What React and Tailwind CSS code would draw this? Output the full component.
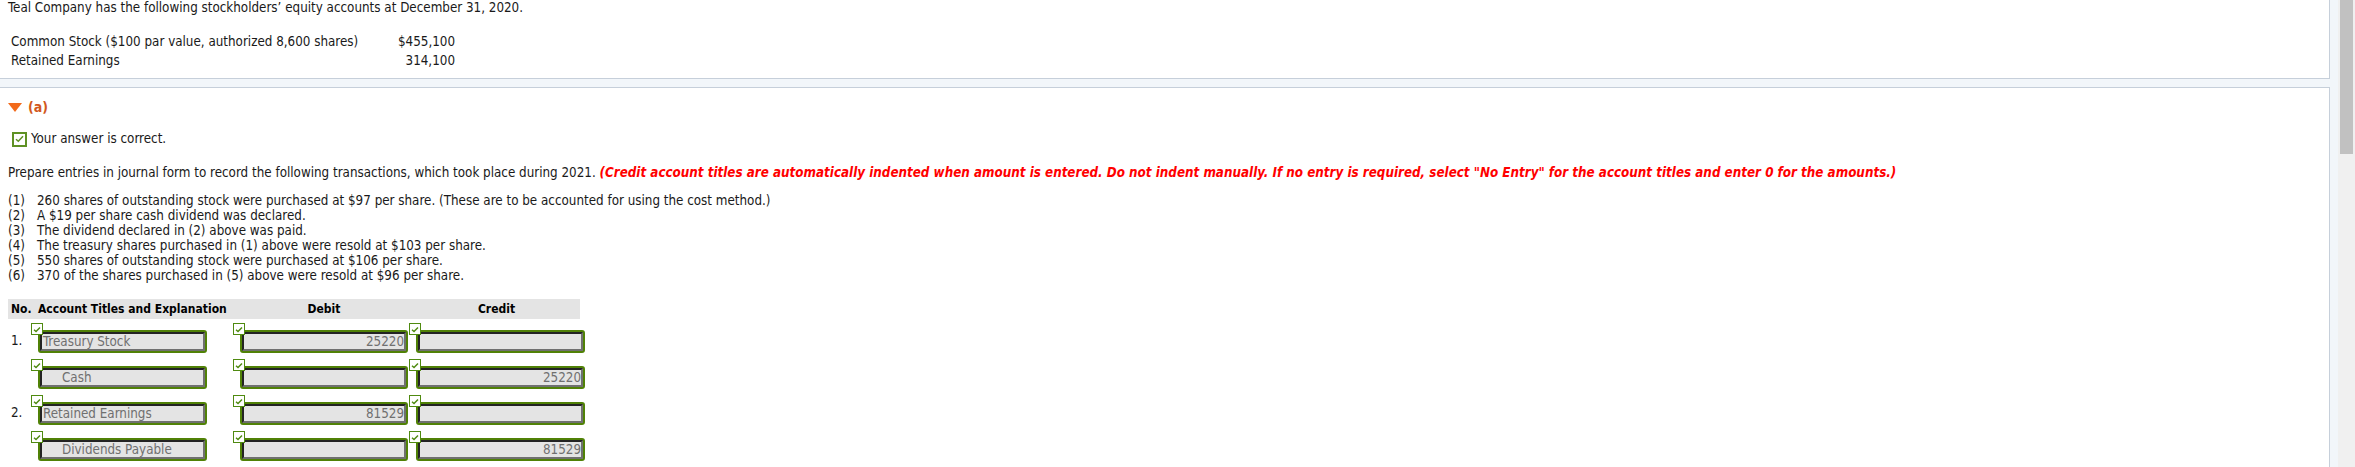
import React from "react";

function SmallCheck({ className = "" }) {
  return (
    <span className={"absolute w-[12px] h-[12px] border border-[#4f8a10] bg-white flex items-center justify-center z-10 " + className}>
      <svg width="8" height="7" viewBox="0 0 8 7">
        <polyline points="1,3.8 3,5.6 7,1.4" fill="none" stroke="#4f8a10" strokeWidth="1.4" />
      </svg>
    </span>
  );
}

function Field({ value = "", align = "left", indent = false, width = "w-[169px]" }) {
  return (
    <div className={"relative " + width}>
      <SmallCheck className="-left-[7px] -top-[7px]" />
      <div className="h-[23px] rounded-[3px] border-2 border-[#508106] bg-[#508106]">
        <div
          className={
            "h-full border-t-2 border-l-2 border-b-2 border-r-2 border-t-[#232323] border-l-[#232323] border-b-[#707070] border-r-[#707070] bg-[#e4e4e4] text-[13.3px] leading-[15px] text-[#707070] whitespace-nowrap overflow-hidden " +
            (align === "right" ? "text-right" : indent ? "pl-[20px]" : "pl-[1px]")
          }
        >
          {value}
        </div>
      </div>
    </div>
  );
}

const rows = [
  { no: "1.", acct: "Treasury Stock", indent: false, debit: "25220", credit: "" },
  { no: "", acct: "Cash", indent: true, debit: "", credit: "25220" },
  { no: "2.", acct: "Retained Earnings", indent: false, debit: "81529", credit: "" },
  { no: "", acct: "Dividends Payable", indent: true, debit: "", credit: "81529" },
];

const items = [
  "260 shares of outstanding stock were purchased at $97 per share. (These are to be accounted for using the cost method.)",
  "A $19 per share cash dividend was declared.",
  "The dividend declared in (2) above was paid.",
  "The treasury shares purchased in (1) above were resold at $103 per share.",
  "550 shares of outstanding stock were purchased at $106 per share.",
  "370 of the shares purchased in (5) above were resold at $96 per share.",
];

export default function App() {
  return (
    <div className="h-[467px] w-[2355px] bg-[#f2f6fa] flex overflow-hidden text-[13.3px] text-[#1a1a1a] font-['DejaVu_Sans_Condensed','DejaVu_Sans',sans-serif]">
      <div className="w-[2330px] flex flex-col gap-[8px]">
        {/* top panel */}
        <div className="h-[79px] bg-white border-r border-b border-[#c6cfda] pl-[8px]">
          <div className="leading-[15px] whitespace-nowrap">
            Teal Company has the following stockholders’ equity accounts at December 31, 2020.
          </div>
          <div className="mt-[17px] pl-[3px] leading-[19px] whitespace-nowrap">
            <div className="flex">
              <div className="w-[387px]">Common Stock ($100 par value, authorized 8,600 shares)</div>
              <div className="w-[57px] text-right">$455,100</div>
            </div>
            <div className="flex">
              <div className="w-[387px]">Retained Earnings</div>
              <div className="w-[57px] text-right">314,100</div>
            </div>
          </div>
        </div>

        {/* second panel */}
        <div className="flex-1 bg-white border-t border-r border-[#c6cfda] pl-[8px]">
          <div className="mt-[10px] h-[18px] flex items-center gap-[6px]">
            <svg width="14" height="9" viewBox="0 0 14 9">
              <polygon points="0,0 14,0 7,9" fill="#f26a1b" />
            </svg>
            <span className="text-[14px] font-bold text-[#d2581c]">(a)</span>
          </div>

          <div className="mt-[15px] h-[16px] flex items-center pl-[4px] gap-[4px]">
            <span className="w-[15px] h-[15px] border-2 border-[#5f9124] bg-white flex items-center justify-center">
              <svg width="9" height="8" viewBox="0 0 9 8">
                <polyline points="1,4.2 3.3,6.3 8,1.3" fill="none" stroke="#5f9124" strokeWidth="1.5" />
              </svg>
            </span>
            <span>Your answer is correct.</span>
          </div>

          <div className="mt-[18px] leading-[15px] whitespace-nowrap">
            Prepare entries in journal form to record the following transactions, which took place during 2021.{" "}
            <span className="text-[#ff0000] font-bold italic">
              (Credit account titles are automatically indented when amount is entered. Do not indent manually. If no entry is required, select "No Entry" for the account titles and enter 0 for the amounts.)
            </span>
          </div>

          <div className="mt-[13px] leading-[15px] whitespace-nowrap">
            {items.map((t, i) => (
              <div key={i} className="flex">
                <span className="w-[29px]">({i + 1})</span>
                <span>{t}</span>
              </div>
            ))}
          </div>

          <div className="mt-[16px] w-[572px]">
            <div className="h-[20px] bg-[#e4e4e4] flex items-center font-bold text-[12px] text-black">
              <div className="w-[30px] pl-[3px]">No.</div>
              <div className="w-[194px]">Account Titles and Explanation</div>
              <div className="w-[176px] pl-[8px] text-center">Debit</div>
              <div className="w-[172px] pl-[8px] pr-[3px] text-center">Credit</div>
            </div>
            {rows.map((r, i) => (
              <div key={i} className="h-[36px] flex items-start pt-[11px]">
                <div className="w-[30px] pl-[3px] pt-[3px] leading-[15px]">{r.no}</div>
                <div className="w-[194px]">
                  <Field value={r.acct} indent={r.indent} />
                </div>
                <div className="w-[176px] pl-[8px]">
                  <Field value={r.debit} align="right" width="w-[168px]" />
                </div>
                <div className="w-[172px] pl-[8px]">
                  <Field value={r.credit} align="right" width="w-[169px]" />
                </div>
              </div>
            ))}
          </div>
        </div>
      </div>

      {/* scrollbar */}
      <div className="ml-[8px] w-[17px] h-full bg-[#f0f0f0] pl-[2px]">
        <div className="w-[13px] h-[154px] bg-[#c1c1c1]" />
      </div>
    </div>
  );
}
